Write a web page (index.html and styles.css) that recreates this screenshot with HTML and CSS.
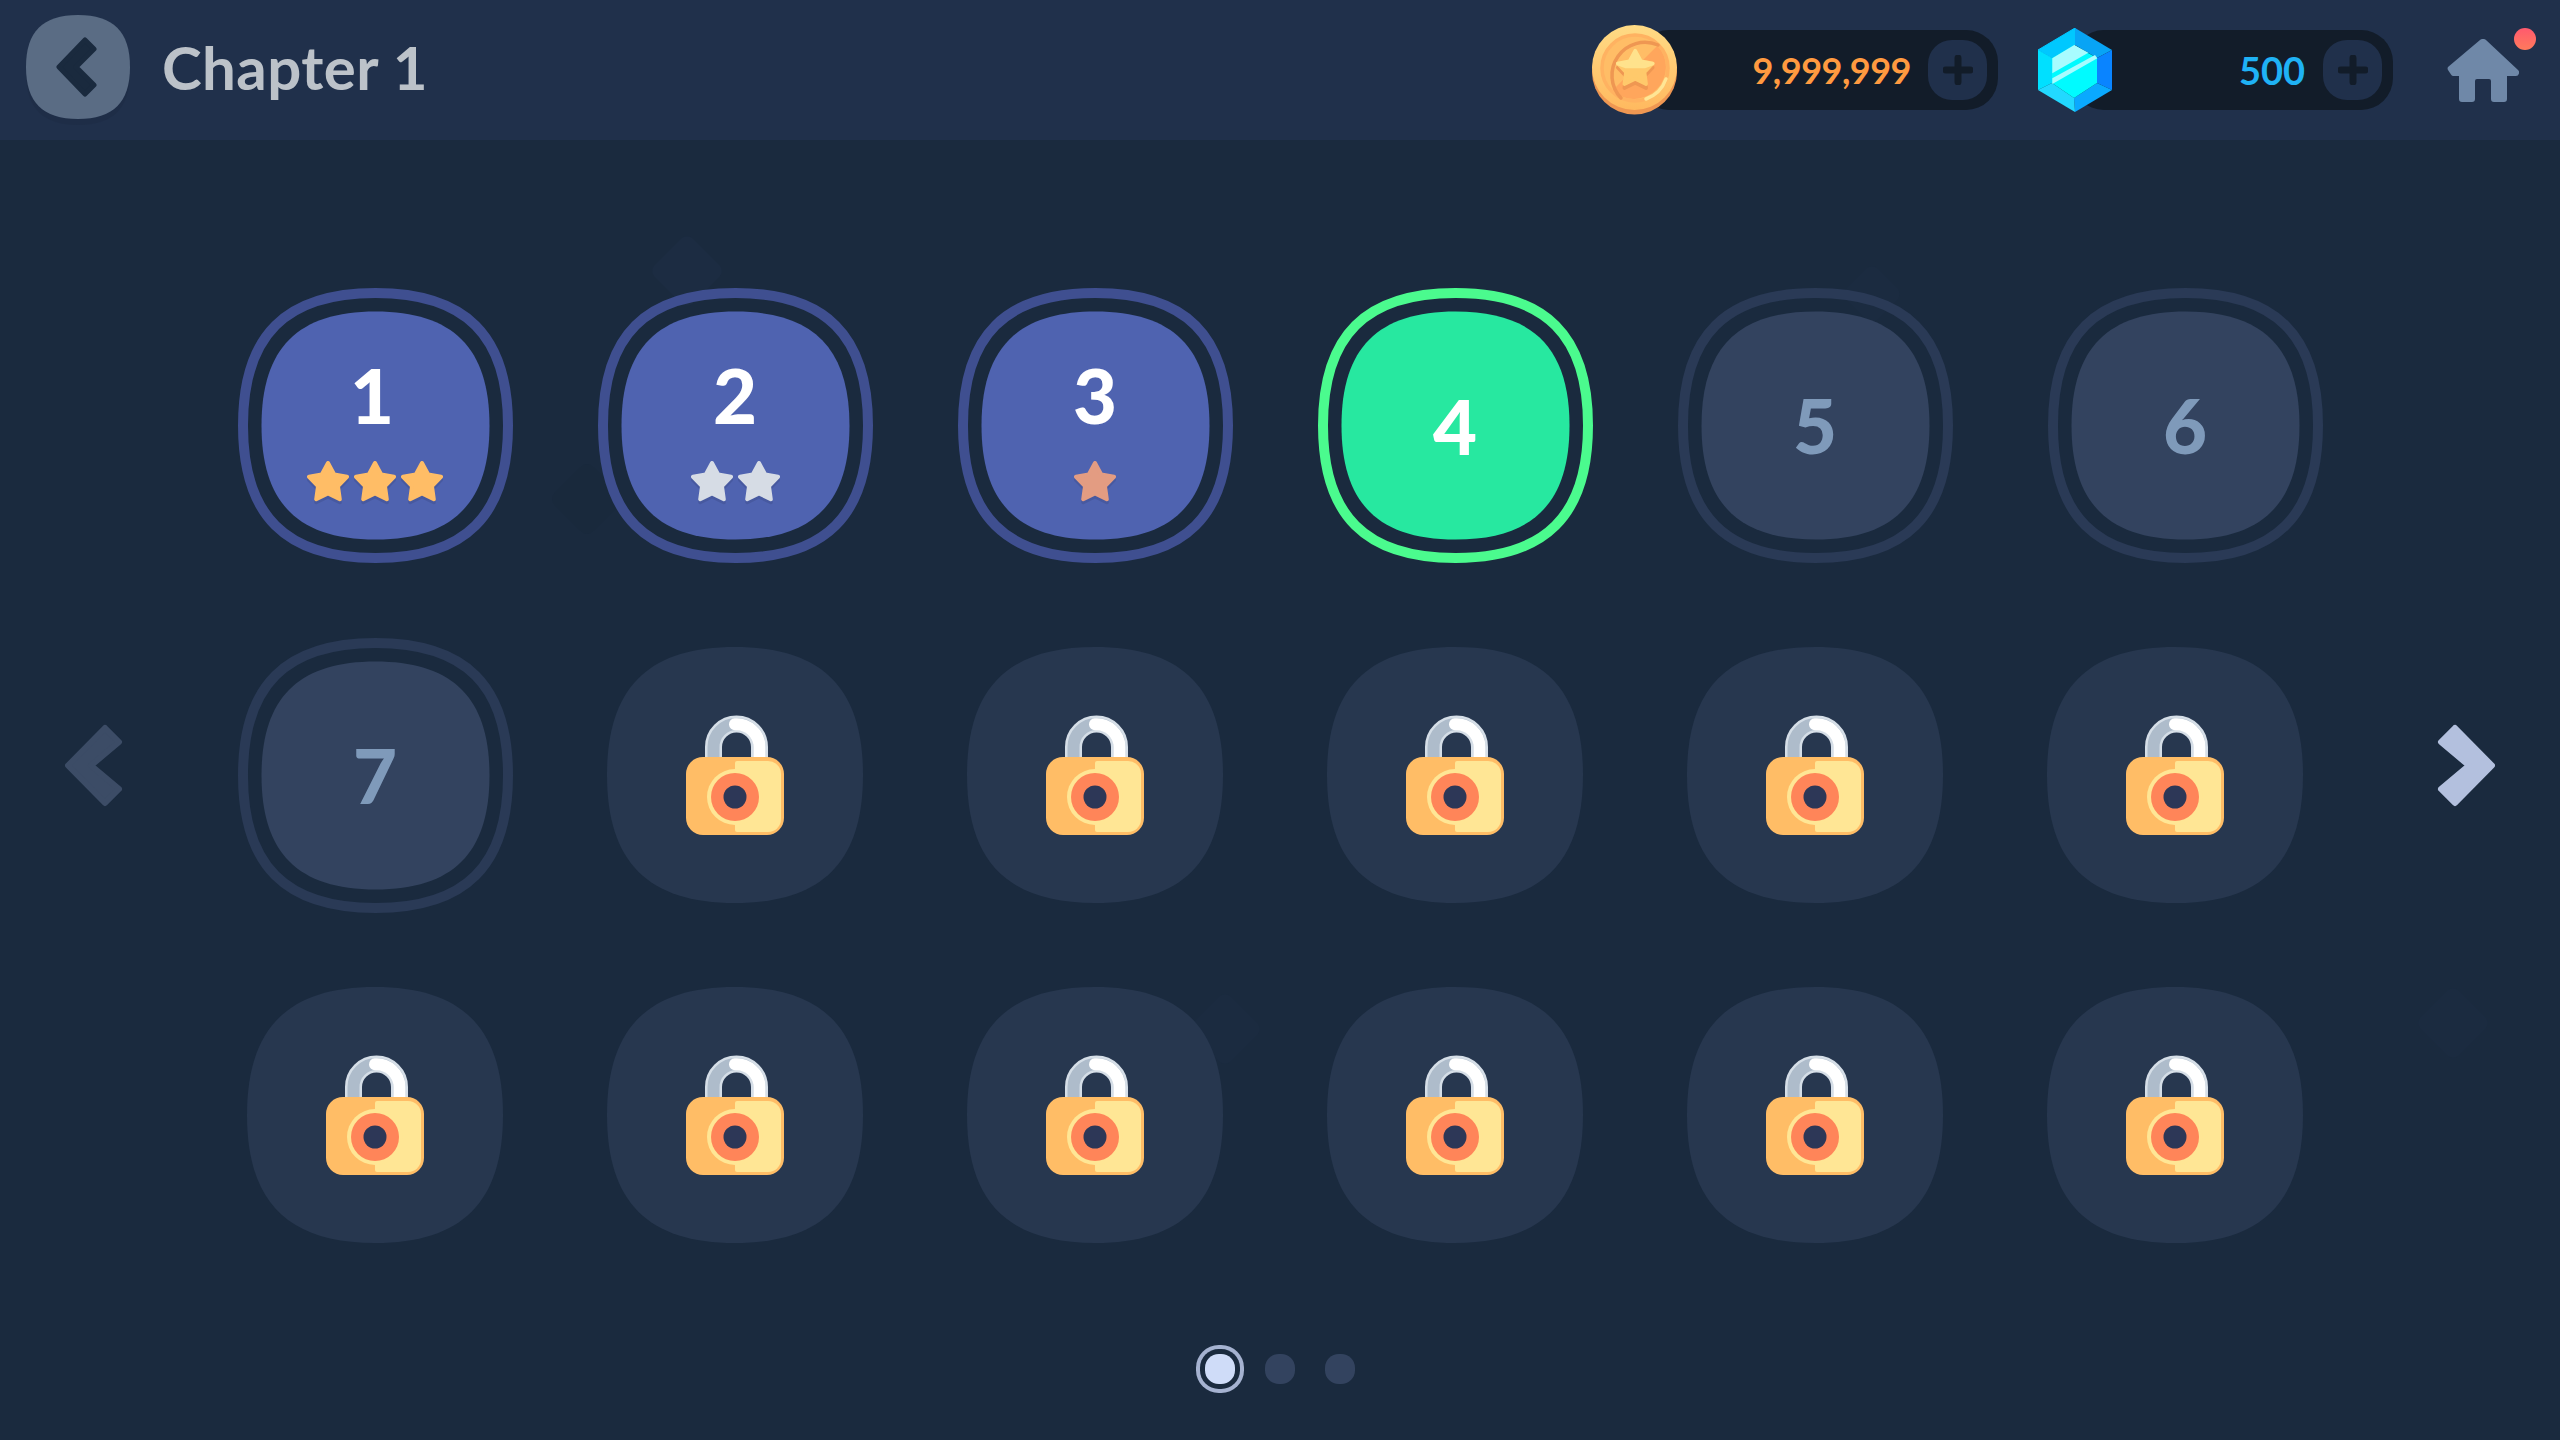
FILE: index.html
```html
<!DOCTYPE html>
<html lang="en">
<head>
<meta charset="utf-8">
<title>Chapter 1</title>
<link rel="stylesheet" href="styles.css">
</head>
<body>
<svg class="defs" width="0" height="0" aria-hidden="true">
  <defs>
    <path id="sq" d="M50 0C84 0 100 16 100 50S84 100 50 100S0 84 0 50S16 0 50 0Z"/>
    <symbol id="star" viewBox="0 0 44 42">
      <polygon points="22,3 28.2,14.5 41,16.8 32,26.2 33.8,39.2 22,33.5 10.2,39.2 12,26.2 3,16.8 15.8,14.5" fill="currentColor" stroke="currentColor" stroke-width="4" stroke-linejoin="round"/>
    </symbol>
    <symbol id="lock" viewBox="0 0 100 122">
      <path d="M28.500 50V32a23 23 0 0 1 46 0V50" fill="none" stroke="#d5dee7" stroke-width="17"/>
      <path d="M28.500 50V32a23 23 0 0 1 46 0V50" fill="none" stroke="#aebccb" stroke-width="12"/>
      <path d="M50 9.300a23 23 0 0 1 24.500 22.700V50" fill="none" stroke="#fff" stroke-width="12" stroke-linecap="round"/>
      <rect x="1" y="42" width="98" height="78" rx="17" fill="#ffbd66"/>
      <path d="M50 48a2 2 0 0 1 2-2H83A13 13 0 0 1 96 59V104A13 13 0 0 1 83 117H52a2 2 0 0 1-2-2Z" fill="#ffe695"/>
      <circle cx="50" cy="82" r="28" fill="#ffe695"/>
      <circle cx="50" cy="82" r="24" fill="#ff8559"/>
      <circle cx="50" cy="82" r="11.5" fill="#2d3757"/>
    </symbol>
    <symbol id="chev" viewBox="0 0 58 85">
      <polygon points="3,42.5 40,5 54,19 26,42.5 54,66 40,80" fill="currentColor" stroke="currentColor" stroke-width="6" stroke-linejoin="round"/>
    </symbol>
    <symbol id="plus" viewBox="0 0 30 30">
      <path d="M15 3V27M3 15H27" stroke="currentColor" stroke-width="7" stroke-linecap="round"/>
    </symbol>
  </defs>
</svg>

<div class="deco deco-a"></div>
<div class="deco deco-b"></div>
<div class="deco deco-c"></div>
<div class="deco deco-d"></div>
<div class="deco deco-e"></div>

<header class="topbar">
  <a class="back">
    <svg class="back-bg" viewBox="0 0 100 100"><use href="#sq"/></svg>
    <svg class="back-chev" viewBox="0 0 41 60"><polygon points="3,30 29,3 38,12 20,30 38,48 29,57" fill="#1a2a3e" stroke="#1a2a3e" stroke-width="5" stroke-linejoin="round"/></svg>
  </a>
  <h1 class="title">Chapter 1</h1>

  <div class="wallet wallet-coin">
    <svg class="coin" viewBox="0 0 85 90">
      <defs>
        <linearGradient id="coinEdge" x1="0" y1="0" x2="0" y2="1"><stop offset="0" stop-color="#ffdb85"/><stop offset="1" stop-color="#ffb95f"/></linearGradient>
      </defs>
      <circle cx="42.5" cy="47" r="42.5" fill="#ef9752"/>
      <circle cx="42.5" cy="42.5" r="42.5" fill="url(#coinEdge)"/>
      <circle cx="43" cy="43" r="32" fill="#ffbd66"/>
      <path d="M65.6 20.4A32 32 0 0 1 20.4 65.6Z" fill="#ffa65c"/>
      <circle cx="43" cy="43" r="33" fill="none" stroke="#ffb261" stroke-width="3.5"/>
      <path d="M29 73A33 33 0 0 1 66 20" fill="none" stroke="#ef9752" stroke-width="3.5" stroke-linecap="round"/>
      <path d="M54 74A33 33 0 0 0 74 54" fill="none" stroke="#ffe695" stroke-width="3.5" stroke-linecap="round"/>
      <polygon transform="translate(23 27) scale(.92)" points="22,3 28.2,14.5 41,16.8 32,26.2 33.8,39.2 22,33.5 10.2,39.2 12,26.2 3,16.8 15.8,14.5" fill="#ef9752" stroke="#ef9752" stroke-width="4" stroke-linejoin="round"/>
      <polygon transform="translate(23 23) scale(.92)" points="22,3 28.2,14.5 41,16.8 32,26.2 33.8,39.2 22,33.5 10.2,39.2 12,26.2 3,16.8 15.8,14.5" fill="#ffc96b" stroke="#ffc96b" stroke-width="4" stroke-linejoin="round"/>
      <polygon transform="translate(23 23) scale(.92)" points="22,3 28.2,14.5 41,16.8 32,20 12,20 3,16.8 15.8,14.5" fill="#ffe28c" stroke="#ffe28c" stroke-width="4" stroke-linejoin="round"/>
    </svg>
    <div class="pill pill-coin">
      <span class="amount amount-coin">9,999,999</span>
      <span class="add"><svg class="add-icon"><use href="#plus"/></svg></span>
    </div>
  </div>

  <div class="wallet wallet-gem">
    <svg class="gem" viewBox="0 0 74 84">
      <polygon points="37,0 37,17 14,30 0,22" fill="#00c8ff" stroke="#00c8ff" stroke-width="1"/>
      <polygon points="37,0 74,22 59,30 37,17" fill="#08a4f5"/>
      <polygon points="74,22 74,62 59,55 59,30" fill="#0a84ff"/>
      <polygon points="74,62 37,84 36,70 59,55" fill="#0aa9ff"/>
      <polygon points="37,84 0,62 14,55 36,70" fill="#22d9ff"/>
      <polygon points="0,62 0,22 14,30 14,55" fill="#00e0ff"/>
      <polygon points="36,17 59,30 59,55 36,70 14,55 14,30" fill="#00fbff"/>
      <polygon points="14.3,30.3 36.3,17 50.3,24.7 14.3,45.3" fill="#a8fcff"/>
      <polygon points="14.3,50.3 57,27 59.3,30.3 14.3,56" fill="#a8fcff"/>
    </svg>
    <div class="pill pill-gem">
      <span class="amount amount-gem">500</span>
      <span class="add"><svg class="add-icon"><use href="#plus"/></svg></span>
    </div>
  </div>

  <a class="home">
    <svg class="home-icon" viewBox="0 0 72 63"><path d="M36 0a4 4 0 0 1 3 1L71 31a3.500 3.500 0 0 1-2 6H60V60a3 3 0 0 1-3 3H47a3 3 0 0 1-3-3V42a2 2 0 0 0-2-2H30a2 2 0 0 0-2 2V60a3 3 0 0 1-3 3H15a3 3 0 0 1-3-3V37H7a3 3 0 0 1-3-1.500L1 31a3 3 0 0 1 0-3L33 1a4 4 0 0 1 3-1Z" fill="#6f88a8"/></svg>
    <span class="badge"></span>
  </a>
</header>

<main class="stage">
  <svg class="arrow arrow-off"><use href="#chev"/></svg>
  <div class="levels">
    <div class="cell"><a class="tile ring done">
      <svg class="shape" viewBox="0 0 275 275"><use href="#sq" class="ring-line"/><use href="#sq" class="fill"/></svg>
      <span class="face"><span class="num num-one">1</span><span class="stars"><svg class="star gold"><use href="#star"/></svg><svg class="star gold"><use href="#star"/></svg><svg class="star gold"><use href="#star"/></svg></span></span>
    </a></div>
    <div class="cell"><a class="tile ring done">
      <svg class="shape" viewBox="0 0 275 275"><use href="#sq" class="ring-line"/><use href="#sq" class="fill"/></svg>
      <span class="face"><span class="num">2</span><span class="stars"><svg class="star silver"><use href="#star"/></svg><svg class="star silver"><use href="#star"/></svg></span></span>
    </a></div>
    <div class="cell"><a class="tile ring done">
      <svg class="shape" viewBox="0 0 275 275"><use href="#sq" class="ring-line"/><use href="#sq" class="fill"/></svg>
      <span class="face"><span class="num">3</span><span class="stars"><svg class="star bronze"><use href="#star"/></svg></span></span>
    </a></div>
    <div class="cell"><a class="tile ring current">
      <svg class="shape" viewBox="0 0 275 275"><use href="#sq" class="ring-line"/><use href="#sq" class="fill"/></svg>
      <span class="face"><span class="num">4</span></span>
    </a></div>
    <div class="cell"><a class="tile ring open">
      <svg class="shape" viewBox="0 0 275 275"><use href="#sq" class="ring-line"/><use href="#sq" class="fill"/></svg>
      <span class="face"><span class="num">5</span></span>
    </a></div>
    <div class="cell"><a class="tile ring open shifted">
      <svg class="shape" viewBox="0 0 275 275"><use href="#sq" class="ring-line"/><use href="#sq" class="fill"/></svg>
      <span class="face"><span class="num">6</span></span>
    </a></div>

    <div class="cell"><a class="tile ring open">
      <svg class="shape" viewBox="0 0 275 275"><use href="#sq" class="ring-line"/><use href="#sq" class="fill"/></svg>
      <span class="face"><span class="num">7</span></span>
    </a></div>
    <div class="cell"><a class="tile locked"><svg class="shape" viewBox="0 0 100 100"><use href="#sq"/></svg><svg class="lock"><use href="#lock"/></svg></a></div>
    <div class="cell"><a class="tile locked"><svg class="shape" viewBox="0 0 100 100"><use href="#sq"/></svg><svg class="lock"><use href="#lock"/></svg></a></div>
    <div class="cell"><a class="tile locked"><svg class="shape" viewBox="0 0 100 100"><use href="#sq"/></svg><svg class="lock"><use href="#lock"/></svg></a></div>
    <div class="cell"><a class="tile locked"><svg class="shape" viewBox="0 0 100 100"><use href="#sq"/></svg><svg class="lock"><use href="#lock"/></svg></a></div>
    <div class="cell"><a class="tile locked"><svg class="shape" viewBox="0 0 100 100"><use href="#sq"/></svg><svg class="lock"><use href="#lock"/></svg></a></div>

    <div class="cell"><a class="tile locked"><svg class="shape" viewBox="0 0 100 100"><use href="#sq"/></svg><svg class="lock"><use href="#lock"/></svg></a></div>
    <div class="cell"><a class="tile locked"><svg class="shape" viewBox="0 0 100 100"><use href="#sq"/></svg><svg class="lock"><use href="#lock"/></svg></a></div>
    <div class="cell"><a class="tile locked"><svg class="shape" viewBox="0 0 100 100"><use href="#sq"/></svg><svg class="lock"><use href="#lock"/></svg></a></div>
    <div class="cell"><a class="tile locked"><svg class="shape" viewBox="0 0 100 100"><use href="#sq"/></svg><svg class="lock"><use href="#lock"/></svg></a></div>
    <div class="cell"><a class="tile locked"><svg class="shape" viewBox="0 0 100 100"><use href="#sq"/></svg><svg class="lock"><use href="#lock"/></svg></a></div>
    <div class="cell"><a class="tile locked"><svg class="shape" viewBox="0 0 100 100"><use href="#sq"/></svg><svg class="lock"><use href="#lock"/></svg></a></div>
  </div>
  <svg class="arrow arrow-on"><use href="#chev"/></svg>
</main>

<nav class="pager">
  <span class="page"><span class="dot active"></span></span>
  <span class="page"><span class="dot"></span></span>
  <span class="page"><span class="dot"></span></span>
</nav>
</body>
</html>
```

FILE: styles.css
```css
* { box-sizing: border-box; }
html, body { margin: 0; padding: 0; }
body {
  position: relative;
  width: 2560px;
  height: 1440px;
  overflow: hidden;
  background: #1a2a3e;
  font-family: "Lato", "Liberation Sans", sans-serif;
}
.defs { position: absolute; }

/* faint background diamonds */
.deco { position: absolute; width: 54px; height: 54px; background: #1c2c42; transform: rotate(45deg); border-radius: 8px; }
.deco-a { left: 660px; top: 244px; }
.deco-b { left: 560px; top: 472px; background: #19293c; }
.deco-c { left: 2426px; top: 996px; background: #1b2b40; }
.deco-d { left: 1198px; top: 1002px; background: #1b2b40; }
.deco-e { left: 1850px; top: 272px; width: 44px; height: 44px; background: #1b2b40; }

/* top bar */
.topbar {
  position: relative;
  display: flex;
  align-items: center;
  height: 140px;
  padding-left: 26px;
  background: #20304b;
}
.back { position: relative; display: flex; align-items: center; justify-content: center; width: 104px; height: 104px; margin-top: -6px; flex: none; }
.back-bg { position: absolute; inset: 0; width: 104px; height: 104px; fill: #5a6c84; overflow: visible; filter: drop-shadow(0 6px 0 #1e2d47); }
.back-chev { position: relative; width: 41px; height: 60px; margin-left: -4px; }
.title { margin: -6px 0 0 32px; font-size: 60px; font-weight: 700; line-height: 1; letter-spacing: .4px; color: #bcc2c9; }

.wallet { display: flex; align-items: center; flex: none; }
.wallet-coin { margin-left: auto; }
.wallet-gem { margin-left: 40px; }
.coin { position: relative; z-index: 1; width: 85px; height: 90px; flex: none; }
.gem { position: relative; z-index: 1; width: 74px; height: 84px; flex: none; }
.pill {
  display: flex;
  align-items: center;
  justify-content: flex-end;
  height: 80px;
  margin-left: -40px;
  padding-right: 11px;
  border-radius: 32px;
  background: #121c29;
}
.pill-coin { width: 361px; }
.pill-gem { width: 321px; }
.amount { margin-right: 17px; font-size: 36px; font-weight: 700; line-height: 1; }
.amount-coin { color: #ff9a40; letter-spacing: -.5px; }
.amount-gem { margin-right: 18px; font-size: 38px; color: #1fb2f5; }
.add { display: flex; align-items: center; justify-content: center; width: 59px; height: 60px; border-radius: 24px; background: #20304b; color: #121c29; }
.add-icon { width: 30px; height: 30px; }

.home { position: relative; flex: none; width: 72px; height: 63px; margin: 0 41px 0 54px; }
.home-icon { display: block; width: 72px; height: 63px; }
.badge { position: absolute; left: 67px; top: -11px; width: 22px; height: 22px; border-radius: 50%; background: linear-gradient(#ff5a6e, #ff7a5c); }

/* level grid */
.stage { position: relative; display: flex; align-items: center; padding: 110px 0 0 65px; }
.arrow { flex: none; width: 58px; height: 85px; }
.arrow-off { color: #3c4c66; }
.arrow-on { color: #b3c0de; transform: scaleX(-1); margin-left: 82px; }
.levels {
  display: grid;
  grid-template-columns: repeat(6, 360px);
  grid-template-rows: 350px 350px 330px;
  margin-left: 72px;
}
.cell { display: flex; align-items: center; justify-content: center; }
.tile { position: relative; display: flex; align-items: center; justify-content: center; }
.shape { position: absolute; inset: 0; width: 100%; height: 100%; overflow: visible; }
.ring { width: 275px; height: 275px; }
.shifted { margin-left: 20px; }
.locked { width: 256px; height: 256px; }
.locked .shape { fill: #27374f; }
.ring-line { fill: none; stroke-width: 3.77; transform: translate(5px, 5px) scale(2.65); }
.fill { transform: translate(23.5px, 23.5px) scale(2.28); }

.done .ring-line { stroke: #3f4f90; }
.done .fill { fill: #4f63b0; }
.current .ring-line { stroke: #4bfb8e; }
.current .fill { fill: #27e8a0; }
.open .ring-line { stroke: #2a3a56; }
.open .fill { fill: #33435f; }

.face { position: relative; display: flex; flex-direction: column; align-items: center; }
.num { font-size: 76px; font-weight: 900; line-height: 54px; color: #fff; }
.num-one { margin-left: -6px; }
.open .num { color: #7f9aba; }
.current .num { margin-top: 2px; }
.stars { display: flex; gap: 3px; margin-top: 38px; }
.done .face { margin-top: 20px; }
.star { width: 44px; height: 42px; filter: drop-shadow(0 3px 0 #4759a0); }
.gold { color: #ffbd66; }
.silver { color: #d6dce5; }
.bronze { color: #e39c82; }
.lock { position: relative; width: 100px; height: 122px; margin: 2px 1px 0 0; }

/* pager */
.pager { display: flex; justify-content: center; margin-top: 65px; }
.page { display: flex; align-items: center; justify-content: center; width: 60px; height: 48px; }
.dot { width: 30px; height: 30px; border-radius: 46%; background: #33435f; }
.dot.active { background: #cfdcf8; box-shadow: 0 0 0 5px #1a2a3e, 0 0 0 9px #a5b2d0; }
```
